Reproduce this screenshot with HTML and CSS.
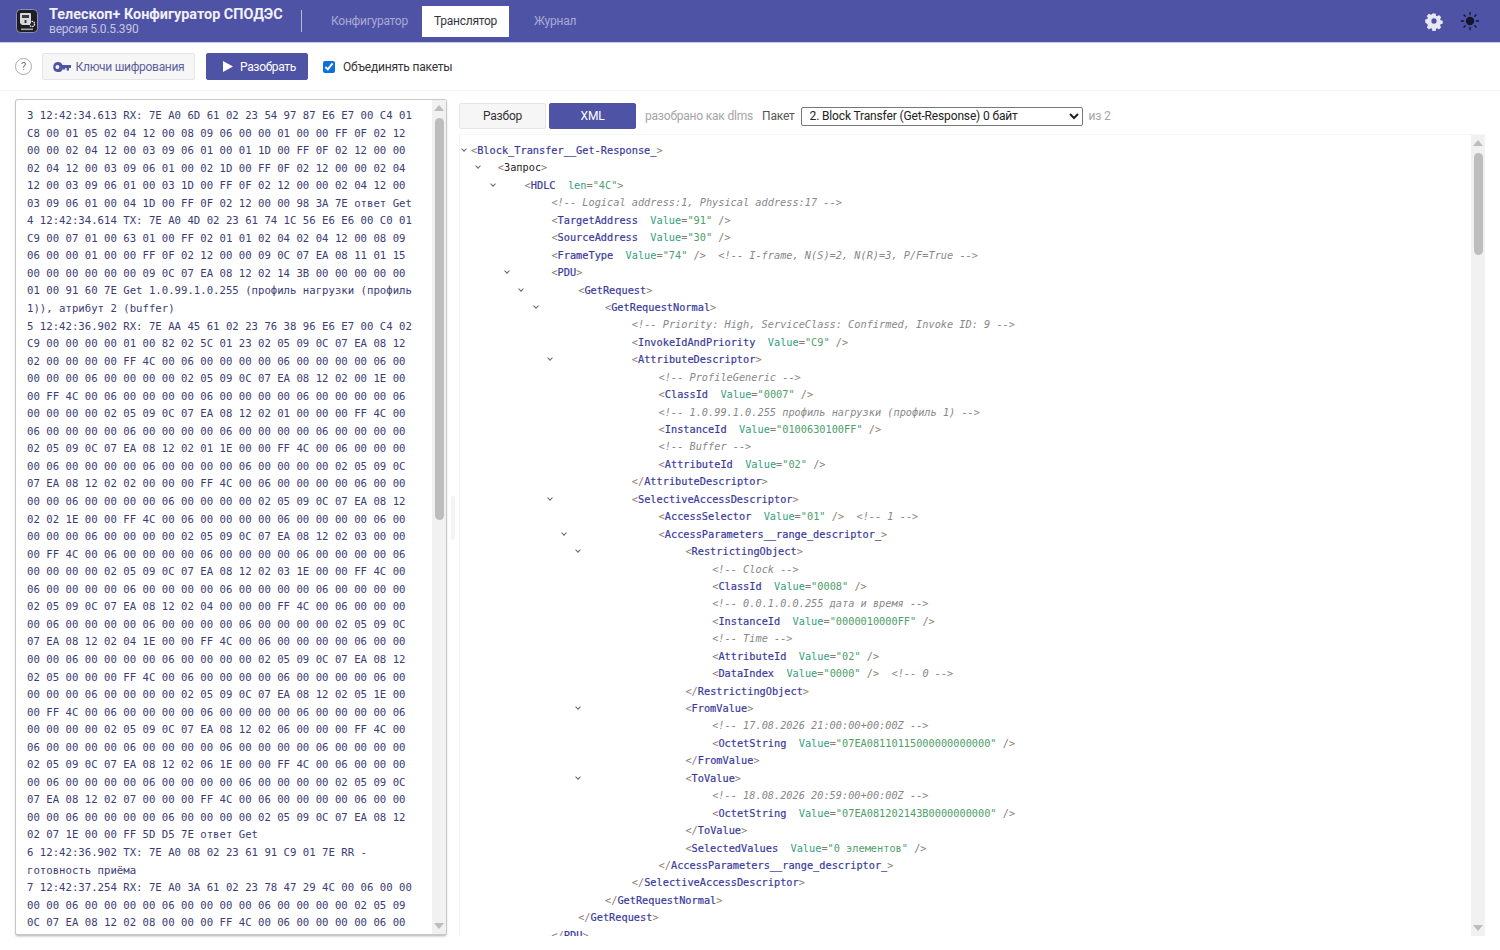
FILE: index.html
```html
<!DOCTYPE html>
<html lang="ru">
<head>
    <meta charset="UTF-8">
    <title>Телескоп+ Конфигуратор СПОДЭС</title>
    <link rel="stylesheet" href="styles.css">
</head>
<body>
    <header class="topbar">
        <div class="logo">
            <svg width="22" height="24" viewBox="0 0 22 24">
                <rect x="0.5" y="0.5" width="21" height="23" rx="4" fill="#1d1d22" stroke="#8d8fb8"/>
                <path d="M5 4h9a1 1 0 0 1 1 1v9l-2 2H6l-2-2V5a1 1 0 0 1 1-1z" fill="#d9d9dc"/>
                <rect x="6" y="6" width="7" height="3" fill="#3a3a40"/>
                <rect x="8.5" y="11" width="2" height="3" fill="#3a3a40"/>
                <circle cx="16" cy="15" r="2.6" fill="none" stroke="#e4e4e6" stroke-width="1.4" stroke-dasharray="1.6 0.7"/>
                <rect x="5" y="19.5" width="12" height="1.6" fill="#a5a5aa"/>
            </svg>
        </div>
        <div class="brand">
            <div class="brand-title">Телескоп+ Конфигуратор СПОДЭС</div>
            <div class="brand-version">версия 5.0.5.390</div>
        </div>
        <div class="divider"></div>
        <nav class="tabs">
            <a class="tab">Конфигуратор</a>
            <a class="tab active">Транслятор</a>
            <a class="tab">Журнал</a>
        </nav>
        <div class="topbar-icons">
            <svg width="20" height="20" viewBox="0 0 20 20">
                <path fill="#e8e8f2" fill-rule="evenodd" d="M8.2 1.5h3.6l.5 2.4 1.3.6 2.1-1.3 2.5 2.5-1.3 2.1.6 1.4 2.4.5v3.5l-2.4.5-.6 1.3 1.3 2.1-2.5 2.5-2.1-1.3-1.3.6-.5 2.4H8.2l-.5-2.4-1.3-.6-2.1 1.3-2.5-2.5 1.3-2.1-.6-1.3L0 11.7V8.2l2.4-.5.6-1.4-1.3-2.1 2.5-2.5 2.1 1.3 1.3-.6zM10 7a3 3 0 1 0 0 6 3 3 0 0 0 0-6z" transform="translate(1.2 1.2) scale(.88)"/>
            </svg>
            <svg width="20" height="20" viewBox="0 0 20 20">
                <circle cx="10" cy="10" r="4.2" fill="#14142c"/>
                <g stroke="#14142c" stroke-width="1.3" stroke-linecap="round">
                    <path d="M10 1.5v2M10 16.5v2M1.5 10h2M16.5 10h2M4 4l1.3 1.3M14.7 14.7L16 16M4 16l1.3-1.3M14.7 5.3L16 4"/>
                </g>
            </svg>
        </div>
    </header>

    <div class="toolbar">
        <span class="help">?</span>
        <button class="btn btn-keys">
            <svg width="18" height="10" viewBox="0 0 18 10">
                <path fill="#4f53a5" fill-rule="evenodd" d="M5 0a5 5 0 0 1 4.6 3H18v3h-2v2.4h-2.4V6h-1.4v1.6H10V6.4A5 5 0 1 1 5 0zM4.4 3a1.9 1.9 0 1 0 0 3.9 1.9 1.9 0 0 0 0-3.9z"/>
            </svg>
            Ключи шифрования
        </button>
        <button class="btn btn-primary btn-parse">
            <svg width="10" height="11" viewBox="0 0 10 11"><path fill="#fff" d="M0 0l10 5.5L0 11z"/></svg>
            Разобрать
        </button>
        <label class="check"><input type="checkbox" checked> Объединять пакеты</label>
    </div>

    <main class="main">
        <section class="log-pane">
            <div class="log-text">
                <div>3 12:42:34.613 RX: 7E A0 6D 61 02 23 54 97 87 E6 E7 00 C4 01 C8 00 01 05 02 04 12 00 08 09 06 00 00 01 00 00 FF 0F 02 12 00 00 02 04 12 00 03 09 06 01 00 01 1D 00 FF 0F 02 12 00 00 02 04 12 00 03 09 06 01 00 02 1D 00 FF 0F 02 12 00 00 02 04 12 00 03 09 06 01 00 03 1D 00 FF 0F 02 12 00 00 02 04 12 00 03 09 06 01 00 04 1D 00 FF 0F 02 12 00 00 98 3A 7E ответ Get</div>
                <div>4 12:42:34.614 TX: 7E A0 4D 02 23 61 74 1C 56 E6 E6 00 C0 01 C9 00 07 01 00 63 01 00 FF 02 01 01 02 04 02 04 12 00 08 09 06 00 00 01 00 00 FF 0F 02 12 00 00 09 0C 07 EA 08 11 01 15 00 00 00 00 00 00 09 0C 07 EA 08 12 02 14 3B 00 00 00 00 00 01 00 91 60 7E Get 1.0.99.1.0.255 (профиль нагрузки (профиль 1)), атрибут 2 (buffer)</div>
                <div>5 12:42:36.902 RX: 7E AA 45 61 02 23 76 38 96 E6 E7 00 C4 02 C9 00 00 00 00 01 00 82 02 5C 01 23 02 05 09 0C 07 EA 08 12 02 00 00 00 00 FF 4C 00 06 00 00 00 00 06 00 00 00 00 06 00 00 00 00 06 00 00 00 00 02 05 09 0C 07 EA 08 12 02 00 1E 00 00 FF 4C 00 06 00 00 00 00 06 00 00 00 00 06 00 00 00 00 06 00 00 00 00 02 05 09 0C 07 EA 08 12 02 01 00 00 00 FF 4C 00 06 00 00 00 00 06 00 00 00 00 06 00 00 00 00 06 00 00 00 00 02 05 09 0C 07 EA 08 12 02 01 1E 00 00 FF 4C 00 06 00 00 00 00 06 00 00 00 00 06 00 00 00 00 06 00 00 00 00 02 05 09 0C 07 EA 08 12 02 02 00 00 00 FF 4C 00 06 00 00 00 00 06 00 00 00 00 06 00 00 00 00 06 00 00 00 00 02 05 09 0C 07 EA 08 12 02 02 1E 00 00 FF 4C 00 06 00 00 00 00 06 00 00 00 00 06 00 00 00 00 06 00 00 00 00 02 05 09 0C 07 EA 08 12 02 03 00 00 00 FF 4C 00 06 00 00 00 00 06 00 00 00 00 06 00 00 00 00 06 00 00 00 00 02 05 09 0C 07 EA 08 12 02 03 1E 00 00 FF 4C 00 06 00 00 00 00 06 00 00 00 00 06 00 00 00 00 06 00 00 00 00 02 05 09 0C 07 EA 08 12 02 04 00 00 00 FF 4C 00 06 00 00 00 00 06 00 00 00 00 06 00 00 00 00 06 00 00 00 00 02 05 09 0C 07 EA 08 12 02 04 1E 00 00 FF 4C 00 06 00 00 00 00 06 00 00 00 00 06 00 00 00 00 06 00 00 00 00 02 05 09 0C 07 EA 08 12 02 05 00 00 00 FF 4C 00 06 00 00 00 00 06 00 00 00 00 06 00 00 00 00 06 00 00 00 00 02 05 09 0C 07 EA 08 12 02 05 1E 00 00 FF 4C 00 06 00 00 00 00 06 00 00 00 00 06 00 00 00 00 06 00 00 00 00 02 05 09 0C 07 EA 08 12 02 06 00 00 00 FF 4C 00 06 00 00 00 00 06 00 00 00 00 06 00 00 00 00 06 00 00 00 00 02 05 09 0C 07 EA 08 12 02 06 1E 00 00 FF 4C 00 06 00 00 00 00 06 00 00 00 00 06 00 00 00 00 06 00 00 00 00 02 05 09 0C 07 EA 08 12 02 07 00 00 00 FF 4C 00 06 00 00 00 00 06 00 00 00 00 06 00 00 00 00 06 00 00 00 00 02 05 09 0C 07 EA 08 12 02 07 1E 00 00 FF 5D D5 7E ответ Get</div>
                <div>6 12:42:36.902 TX: 7E A0 08 02 23 61 91 C9 01 7E RR - готовность приёма</div>
                <div>7 12:42:37.254 RX: 7E A0 3A 61 02 23 78 47 29 4C 00 06 00 00 00 00 06 00 00 00 00 06 00 00 00 00 06 00 00 00 00 02 05 09 0C 07 EA 08 12 02 08 00 00 00 FF 4C 00 06 00 00 00 00 06 00</div>
            </div>
            <div class="scrollbar">
                <span class="arrow-up"></span>
                <span class="thumb thumb-log"></span>
                <span class="scroll-space"></span>
                <span class="arrow-down"></span>
            </div>
        </section>

        <div class="splitter"><span></span></div>

        <section class="result-pane">
            <div class="result-tools">
                <button class="btn btn-view">Разбор</button>
                <button class="btn btn-primary btn-view">XML</button>
                <span class="muted parsed-as">разобрано как dlms</span>
                <span class="packet-label">Пакет</span>
                <select class="packet-select">
                    <option>2. Block Transfer (Get-Response) 0 байт</option>
                </select>
                <span class="muted">из 2</span>
            </div>
            <div class="xml-box">
                <div class="xml-tree">
                    <div class="row l0"><i class="chev"></i><span class="ln"><b>&lt;</b><u>Block_Transfer__Get-Response_</u><b>&gt;</b></span></div>
                    <div class="row l1"><i class="chev"></i><span class="ln"><b>&lt;</b><u class="dark">Запрос</u><b>&gt;</b></span></div>
                    <div class="row l2"><i class="chev"></i><span class="ln"><b>&lt;</b><u>HDLC</u>  <s>len</s><b>=</b><em>"4C"</em><b>&gt;</b></span></div>
                    <div class="row l3"><i class="none"></i><span class="ln"><q>&lt;!-- Logical address:1, Physical address:17 --&gt;</q></span></div>
                    <div class="row l3"><i class="none"></i><span class="ln"><b>&lt;</b><u>TargetAddress</u>  <s>Value</s><b>=</b><em>"91"</em> <b>/&gt;</b></span></div>
                    <div class="row l3"><i class="none"></i><span class="ln"><b>&lt;</b><u>SourceAddress</u>  <s>Value</s><b>=</b><em>"30"</em> <b>/&gt;</b></span></div>
                    <div class="row l3"><i class="none"></i><span class="ln"><b>&lt;</b><u>FrameType</u>  <s>Value</s><b>=</b><em>"74"</em> <b>/&gt;</b>  <q>&lt;!-- I-frame, N(S)=2, N(R)=3, P/F=True --&gt;</q></span></div>
                    <div class="row l3"><i class="chev"></i><span class="ln"><b>&lt;</b><u>PDU</u><b>&gt;</b></span></div>
                    <div class="row l4"><i class="chev"></i><span class="ln"><b>&lt;</b><u>GetRequest</u><b>&gt;</b></span></div>
                    <div class="row l5"><i class="chev"></i><span class="ln"><b>&lt;</b><u>GetRequestNormal</u><b>&gt;</b></span></div>
                    <div class="row l6"><i class="none"></i><span class="ln"><q>&lt;!-- Priority: High, ServiceClass: Confirmed, Invoke ID: 9 --&gt;</q></span></div>
                    <div class="row l6"><i class="none"></i><span class="ln"><b>&lt;</b><u>InvokeIdAndPriority</u>  <s>Value</s><b>=</b><em>"C9"</em> <b>/&gt;</b></span></div>
                    <div class="row l6"><i class="chev"></i><span class="ln"><b>&lt;</b><u>AttributeDescriptor</u><b>&gt;</b></span></div>
                    <div class="row l7"><i class="none"></i><span class="ln"><q>&lt;!-- ProfileGeneric --&gt;</q></span></div>
                    <div class="row l7"><i class="none"></i><span class="ln"><b>&lt;</b><u>ClassId</u>  <s>Value</s><b>=</b><em>"0007"</em> <b>/&gt;</b></span></div>
                    <div class="row l7"><i class="none"></i><span class="ln"><q>&lt;!-- 1.0.99.1.0.255 профиль нагрузки (профиль 1) --&gt;</q></span></div>
                    <div class="row l7"><i class="none"></i><span class="ln"><b>&lt;</b><u>InstanceId</u>  <s>Value</s><b>=</b><em>"0100630100FF"</em> <b>/&gt;</b></span></div>
                    <div class="row l7"><i class="none"></i><span class="ln"><q>&lt;!-- Buffer --&gt;</q></span></div>
                    <div class="row l7"><i class="none"></i><span class="ln"><b>&lt;</b><u>AttributeId</u>  <s>Value</s><b>=</b><em>"02"</em> <b>/&gt;</b></span></div>
                    <div class="row l6"><i class="none"></i><span class="ln"><b>&lt;/</b><u>AttributeDescriptor</u><b>&gt;</b></span></div>
                    <div class="row l6"><i class="chev"></i><span class="ln"><b>&lt;</b><u>SelectiveAccessDescriptor</u><b>&gt;</b></span></div>
                    <div class="row l7"><i class="none"></i><span class="ln"><b>&lt;</b><u>AccessSelector</u>  <s>Value</s><b>=</b><em>"01"</em> <b>/&gt;</b>  <q>&lt;!-- 1 --&gt;</q></span></div>
                    <div class="row l7"><i class="chev"></i><span class="ln"><b>&lt;</b><u>AccessParameters__range_descriptor_</u><b>&gt;</b></span></div>
                    <div class="row l8"><i class="chev"></i><span class="ln"><b>&lt;</b><u>RestrictingObject</u><b>&gt;</b></span></div>
                    <div class="row l9"><i class="none"></i><span class="ln"><q>&lt;!-- Clock --&gt;</q></span></div>
                    <div class="row l9"><i class="none"></i><span class="ln"><b>&lt;</b><u>ClassId</u>  <s>Value</s><b>=</b><em>"0008"</em> <b>/&gt;</b></span></div>
                    <div class="row l9"><i class="none"></i><span class="ln"><q>&lt;!-- 0.0.1.0.0.255 дата и время --&gt;</q></span></div>
                    <div class="row l9"><i class="none"></i><span class="ln"><b>&lt;</b><u>InstanceId</u>  <s>Value</s><b>=</b><em>"0000010000FF"</em> <b>/&gt;</b></span></div>
                    <div class="row l9"><i class="none"></i><span class="ln"><q>&lt;!-- Time --&gt;</q></span></div>
                    <div class="row l9"><i class="none"></i><span class="ln"><b>&lt;</b><u>AttributeId</u>  <s>Value</s><b>=</b><em>"02"</em> <b>/&gt;</b></span></div>
                    <div class="row l9"><i class="none"></i><span class="ln"><b>&lt;</b><u>DataIndex</u>  <s>Value</s><b>=</b><em>"0000"</em> <b>/&gt;</b>  <q>&lt;!-- 0 --&gt;</q></span></div>
                    <div class="row l8"><i class="none"></i><span class="ln"><b>&lt;/</b><u>RestrictingObject</u><b>&gt;</b></span></div>
                    <div class="row l8"><i class="chev"></i><span class="ln"><b>&lt;</b><u>FromValue</u><b>&gt;</b></span></div>
                    <div class="row l9"><i class="none"></i><span class="ln"><q>&lt;!-- 17.08.2026 21:00:00+00:00Z --&gt;</q></span></div>
                    <div class="row l9"><i class="none"></i><span class="ln"><b>&lt;</b><u>OctetString</u>  <s>Value</s><b>=</b><em>"07EA08110115000000000000"</em> <b>/&gt;</b></span></div>
                    <div class="row l8"><i class="none"></i><span class="ln"><b>&lt;/</b><u>FromValue</u><b>&gt;</b></span></div>
                    <div class="row l8"><i class="chev"></i><span class="ln"><b>&lt;</b><u>ToValue</u><b>&gt;</b></span></div>
                    <div class="row l9"><i class="none"></i><span class="ln"><q>&lt;!-- 18.08.2026 20:59:00+00:00Z --&gt;</q></span></div>
                    <div class="row l9"><i class="none"></i><span class="ln"><b>&lt;</b><u>OctetString</u>  <s>Value</s><b>=</b><em>"07EA081202143B0000000000"</em> <b>/&gt;</b></span></div>
                    <div class="row l8"><i class="none"></i><span class="ln"><b>&lt;/</b><u>ToValue</u><b>&gt;</b></span></div>
                    <div class="row l8"><i class="none"></i><span class="ln"><b>&lt;</b><u>SelectedValues</u>  <s>Value</s><b>=</b><em>"0 элементов"</em> <b>/&gt;</b></span></div>
                    <div class="row l7"><i class="none"></i><span class="ln"><b>&lt;/</b><u>AccessParameters__range_descriptor_</u><b>&gt;</b></span></div>
                    <div class="row l6"><i class="none"></i><span class="ln"><b>&lt;/</b><u>SelectiveAccessDescriptor</u><b>&gt;</b></span></div>
                    <div class="row l5"><i class="none"></i><span class="ln"><b>&lt;/</b><u>GetRequestNormal</u><b>&gt;</b></span></div>
                    <div class="row l4"><i class="none"></i><span class="ln"><b>&lt;/</b><u>GetRequest</u><b>&gt;</b></span></div>
                    <div class="row l3"><i class="none"></i><span class="ln"><b>&lt;/</b><u>PDU</u><b>&gt;</b></span></div>
                </div>
                <div class="scrollbar">
                    <span class="arrow-up"></span>
                    <span class="thumb thumb-xml"></span>
                    <span class="scroll-space"></span>
                    <span class="arrow-down"></span>
                </div>
            </div>
        </section>
    </main>
</body>
</html>
```

FILE: styles.css
```css
html, body {
    margin: 0;
    height: 100%;
    overflow: hidden;
    background: #fff;
}

body {
    font-family: Roboto, "Liberation Sans", sans-serif;
    font-size: 12px;
    letter-spacing: -0.2px;
    color: #222;
    display: flex;
    flex-direction: column;
    height: 950px;
}

/* top bar */
.topbar {
    flex: 0 0 42px;
    display: flex;
    align-items: center;
    background: #4f53a5;
    border-bottom: 1px solid #c9cae3;
    padding: 0 20px 0 16px;
}

.logo {
    width: 22px;
    height: 24px;
    margin-right: 11px;
}

.brand {
    width: 252px;
}

.brand-title {
    color: #f1f1f8;
    font-size: 14.4px;
    font-weight: 700;
    line-height: 17px;
    letter-spacing: 0;
}

.brand-version {
    color: #c4c5e2;
    font-size: 12px;
    line-height: 13px;
}

.divider {
    width: 1px;
    height: 22px;
    background: #b9bbdc;
    margin-right: 17px;
}

.tabs {
    display: flex;
    align-items: center;
    gap: 2px;
}

.tab {
    padding: 0 12px;
    line-height: 31px;
    color: #a9abd6;
    font-size: 12px;
    letter-spacing: -0.25px;
}

.tab.active {
    background: #fff;
    color: #33343d;
}

.tab:last-child {
    margin-left: 11px;
}

.topbar-icons {
    margin-left: auto;
    display: flex;
    align-items: center;
    gap: 16px;
}

/* toolbar */
.toolbar {
    flex: 0 0 48px;
    display: flex;
    align-items: center;
    padding: 0 0 0 15px;
    border-bottom: 1px solid #f6f6f6;
    box-sizing: border-box;
}

.help {
    width: 15px;
    height: 15px;
    border: 1px solid #aaa;
    border-radius: 50%;
    color: #777;
    text-align: center;
    line-height: 15px;
    font-size: 11px;
    margin-right: 10px;
}

.btn {
    font-family: inherit;
    font-size: 12px;
    letter-spacing: -0.2px;
    height: 27px;
    border: 1px solid #e6e6e6;
    border-radius: 2px;
    background: #f6f6f6;
    color: #333;
    cursor: pointer;
}

.btn-primary {
    background: #4f53a5;
    border-color: #4f53a5;
    color: #fff;
}

.btn-keys {
    width: 153px;
    color: #5b5f9d;
    letter-spacing: -0.3px;
    display: flex;
    align-items: center;
    justify-content: center;
    gap: 5px;
    margin-right: 11px;
}

.btn-parse {
    width: 102px;
    letter-spacing: -0.33px;
    display: flex;
    align-items: center;
    gap: 7px;
    padding: 0 0 0 16px;
    margin-right: 15px;
}

.check {
    display: flex;
    align-items: center;
    gap: 8px;
    color: #333;
}

.check input {
    margin: 0;
    width: 12px;
    height: 12px;
    accent-color: #0b6fe0;
}

/* main panes */
.main {
    flex: 1;
    min-height: 0;
    display: flex;
    padding: 8px 15px 14px 15px;
}

.log-pane {
    flex: 0 0 432px;
    box-sizing: border-box;
    display: flex;
    border: 1px solid #c8c8c8;
    border-bottom-width: 2px;
    border-radius: 3px;
    box-shadow: 0 1px 2px rgba(0, 0, 0, 0.15);
    overflow: hidden;
}

.log-text {
    flex: 1;
    padding: 7px 15px 0 11px;
    font-family: "DejaVu Sans Mono", monospace;
    font-size: 10.67px;
    letter-spacing: 0;
    line-height: 17.55px;
    color: #3c3c76;
    overflow: hidden;
}

.splitter {
    flex: 0 0 12px;
    display: flex;
    align-items: center;
    justify-content: center;
}

.splitter span {
    width: 4px;
    height: 44px;
    border-radius: 2px;
    background: #f4f4f4;
}

.result-pane {
    flex: 1;
    min-width: 0;
    display: flex;
    flex-direction: column;
}

.result-tools {
    flex: 0 0 26px;
    display: flex;
    align-items: center;
    margin: 4px 0 5px 0;
    color: #555;
}

.btn-view {
    width: 87px;
    height: 26px;
    margin-right: 3px;
}

.muted {
    color: #a5a5a5;
}

.parsed-as {
    margin: 0 9px 0 6px;
}

.packet-label {
    color: #555;
    margin-right: 6px;
}

.packet-select {
    width: 282px;
    height: 19px;
    font-family: inherit;
    font-size: 12px;
    letter-spacing: -0.15px;
    color: #222;
    background: #fff;
    border: 1px solid #777;
    border-radius: 2px;
    padding: 0 0 0 4px;
    margin-right: 6px;
}

.xml-box {
    flex: 1;
    min-height: 0;
    display: flex;
    border: 1px solid #f7f7f7;
    border-width: 1px 0 0 1px;
    overflow: hidden;
}

.xml-tree {
    flex: 1;
    padding: 7px 0 0 0;
    overflow: hidden;
    font-family: "DejaVu Sans Mono", monospace;
    font-size: 10.27px;
    letter-spacing: 0;
    line-height: 17.45px;
}

/* a tree row: chevron column grows at one rate, the text at another */
.row {
    display: flex;
    height: 17.45px;
    padding-left: calc(var(--l) * 14.3px);
}

.l0 { --l: 0; }
.l1 { --l: 1; }
.l2 { --l: 2; }
.l3 { --l: 3; }
.l4 { --l: 4; }
.l5 { --l: 5; }
.l6 { --l: 6; }
.l7 { --l: 7; }
.l8 { --l: 8; }
.l9 { --l: 9; }

.row i {
    flex: 0 0 11px;
    position: relative;
}

.chev::before {
    content: "";
    position: absolute;
    left: 2px;
    top: 5px;
    width: 3px;
    height: 3px;
    border-right: 1px solid #666;
    border-bottom: 1px solid #666;
    transform: rotate(45deg);
}

.ln {
    white-space: pre;
    margin-left: calc(var(--l) * 12.5px);
}

.ln b {
    font-weight: 400;
    color: #8a7c6c;
}

.ln u {
    text-decoration: none;
    color: #3a3a9c;
    -webkit-text-stroke: 0.2px #3a3a9c;
}

.ln u.dark {
    color: #222;
    -webkit-text-stroke: 0;
}

.ln s {
    text-decoration: none;
    color: #2f9e7e;
}

.ln em {
    font-style: normal;
    color: #4fa06a;
}

.ln q {
    quotes: none;
    font-style: italic;
    color: #888;
}

/* scrollbars are drawn, the panes themselves do not scroll */
.scrollbar {
    flex: 0 0 14px;
    display: flex;
    flex-direction: column;
    align-items: center;
    background: #f1f1f1;
}

.arrow-up, .arrow-down {
    flex: 0 0 auto;
    width: 0;
    height: 0;
    border-left: 5px solid transparent;
    border-right: 5px solid transparent;
}

.arrow-up {
    border-bottom: 6px solid #bdbdbd;
    margin-top: 5px;
}

.arrow-down {
    border-top: 6px solid #bdbdbd;
    margin-bottom: 5px;
}

.thumb {
    flex: 0 0 auto;
    width: 9px;
    border-radius: 5px;
    background: #bdbdbd;
    margin-top: 7px;
}

.thumb-log {
    height: 402px;
}

.thumb-xml {
    height: 102px;
}

.scroll-space {
    flex: 1;
}
```
